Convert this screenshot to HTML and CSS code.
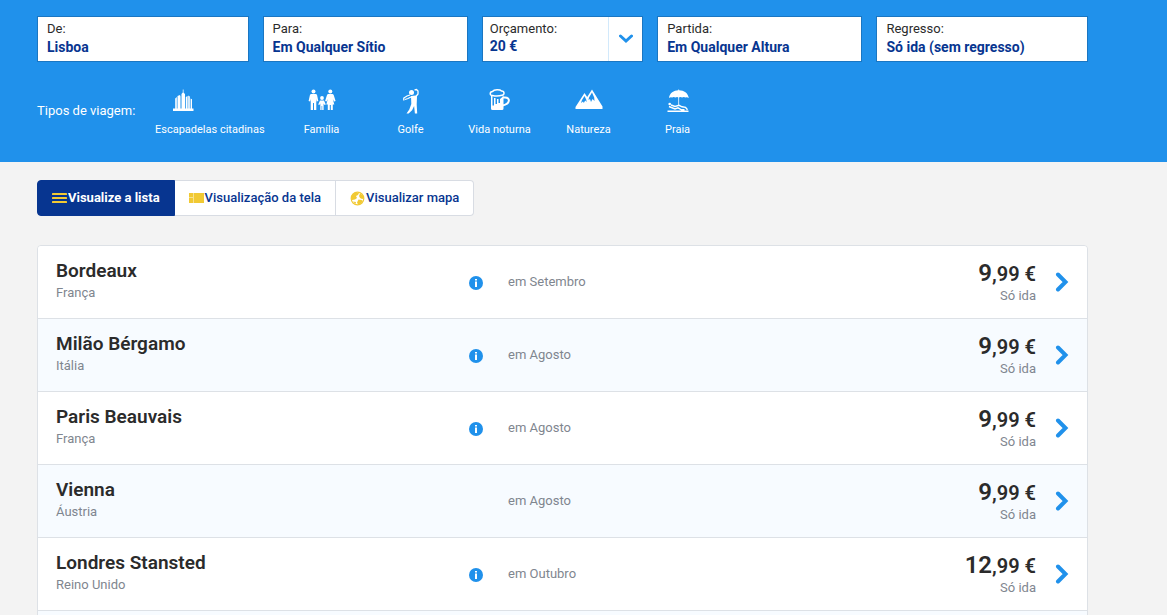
FILE: index.html
```html
<!DOCTYPE html>
<html lang="pt">
<head>
<meta charset="utf-8">
<title>Tarifas a partir de Lisboa</title>
<meta name="viewport" content="width=device-width, initial-scale=1">
<link rel="stylesheet" href="styles.css">
</head>
<body>
<header class="search">
  <form class="fields">
    <div class="field field-wide">
      <label for="from">De:</label>
      <input id="from" type="text" value="Lisboa">
    </div>
    <div class="field">
      <label for="to">Para:</label>
      <input id="to" type="text" value="Em Qualquer Sítio">
    </div>
    <div class="field field-budget">
      <label for="budget">Orçamento:</label>
      <select id="budget"><option>20 €</option></select>
      <span class="caret"><svg width="14" height="10" viewBox="0 0 14 10"><path d="M1.500 2 7 7l5.500-5" fill="none" stroke="#2091eb" stroke-width="3" stroke-linecap="round"/></svg></span>
    </div>
    <div class="field">
      <label for="out">Partida:</label>
      <input id="out" type="text" value="Em Qualquer Altura">
    </div>
    <div class="field field-wide">
      <label for="back">Regresso:</label>
      <input id="back" type="text" value="Só ida (sem regresso)">
    </div>
  </form>
  <nav class="trips" aria-label="Tipos de viagem">
    <span class="trips-label">Tipos de viagem:</span>
    <button class="trip trip-city" type="button">
      <svg width="22" height="26" viewBox="0 0 22 26" fill="#fff"><path d="M1 20.500h20.500V23H1z"/><path d="M3 10.500 5 9v12H3zM16 7.500l2 1V21h-2z" opacity=".8"/><path d="M5.500 8 8 7l.5 1.500V21h-3zM9.500 6l1.300-1.500V1.500h.7v3L13 6v15H9.500zM13.800 9l1.800-1v13h-1.800zM18.600 10.500l1.400.8V21h-1.400z"/></svg>
      <span>Escapadelas citadinas</span>
    </button>
    <button class="trip" type="button">
      <svg width="28" height="26" viewBox="0 0 28 26" fill="#fff"><circle cx="5.500" cy="3.500" r="2"/><circle cx="22.300" cy="3.500" r="2"/><circle cx="14" cy="10" r="1.900"/><path d="M3 6h5l1 .8 1.300 6.200-1.500.4L8.300 11v11H6v-7H5v7H2.700V11l-.6 2.500L.6 13 2 6.800zM20 6h4.600l1 .8 2 6.200-1.500.5-1.300-2.500 1.500 5.500h-1.500V22h-2v-5h-1v5h-2v-5.500h-1.500l1.500-5.500-1.300 2.500-1.400-.5 2-6.200zM12 12.500h4l1.800 4-1.200.6-1-1.600V22h-1.400v-4h-.6v4h-1.300v-6.500l-1 1.600-1.100-.6z"/></svg>
      <span>Família</span>
    </button>
    <button class="trip" type="button">
      <svg width="18" height="26" viewBox="0 0 18 26" fill="#fff"><circle cx="9.500" cy="4.500" r="2.500"/><path d="M9 8l4.500-.5 1.500 1-.3 8 .5 9h-2.300l-.8-7.500-2 4.200-3.500 3.300H4.500l2.800-4 2-5.500z"/><path d="M10 8.500 6 10.500 3 11.500M8 7 5 8 1.800 10v2.500M13.500 9 16 6V3l-1.500-1.500-2 .3" fill="none" stroke="#fff" stroke-width="1.300"/></svg>
      <span>Golfe</span>
    </button>
    <button class="trip" type="button">
      <svg width="24" height="26" viewBox="0 0 24 26"><path d="M4.500 7.500C1.500 7.800 1.500 3.600 4.500 3.500 6 1.300 12 1.300 13.500 3c3-.2 3.500 4 .5 4.300-2 .6-7.500.7-9.500.2z" fill="none" stroke="#fff" stroke-width="1.500"/><path d="M14.500 9.500h2.500c5.500 0 5.500 6.500-2.500 8" fill="none" stroke="#fff" stroke-width="2"/><path d="M3 8h1.500v9.500H6V10h1.500v6H9v-5h1.500v4H12v-4l3.500-3v12.500q0 1.500-1.500 1.500H4.500Q3 22 3 20.500z" fill="#fff"/></svg>
      <span>Vida noturna</span>
    </button>
    <button class="trip" type="button">
      <svg width="28" height="26" viewBox="0 0 28 26" fill="#fff" fill-rule="evenodd"><path d="M.5 19 9.500 5l2.700 4L17 1.500 27.500 18.500V21H.5zM9.500 8 7 12l-1 3 2-1.500.8 1.500 1.400-2.500 1.500 1.500-.5-2.500zM17 4.500l-3 5-.5 2.500 1.500-1 1 3 1.500-3 2 2-.3-3.500z"/></svg>
      <span>Natureza</span>
    </button>
    <button class="trip" type="button">
      <svg width="24" height="26" viewBox="0 0 24 26" fill="#fff"><path d="M3 10C3.500 5 8 2.500 12.300 2.300V1.500h.8v.8C18 2.500 22 5 22.800 10q-1.700-1.300-3.300-.5-1.700-1-3.400 0-1.700-1-3.400 0-1.700-1-3.300 0-1.700-1-3.300 0Q4.500 8.800 3 10z"/><path d="M12.300 9h.8v8.500h-.8z"/><circle cx="3.700" cy="16" r="1.300"/><path d="m5 17 4 1.500 4-1.200 3 1.500 3.500.5 2 2.500M3 18.500l6 2.500 3-1.200 3.500 2h3M1.500 23.300h21" fill="none" stroke="#fff" stroke-width="1.400"/></svg>
      <span>Praia</span>
    </button>
  </nav>
</header>
<main class="results">
  <div class="views">
    <button class="view view-active" type="button">
      <svg width="15" height="12" viewBox="0 0 15 12" fill="#f1c933"><rect width="15" height="2" y="1" rx=".6"/><rect width="15" height="2" y="5" rx=".6"/><rect width="15" height="2" y="9" rx=".6"/></svg>
      <span>Visualize a lista</span>
    </button>
    <button class="view" type="button">
      <svg width="15" height="12" viewBox="0 0 15 12" fill="#f1c933"><rect width="15" height="10" y="1" rx=".5" opacity=".55"/><path d="M0 1h4v4H0zM0 6h4v5H0zM5 1h10v10H5z"/></svg>
      <span>Visualização da tela</span>
    </button>
    <button class="view" type="button">
      <svg width="15" height="15" viewBox="0 0 15 15"><circle cx="7.500" cy="7.500" r="6.300" fill="none" stroke="#f1c933" stroke-width="1.200"/><path d="M2 4 5 1.500l4 .5L8 4 6 5l1 2-2 1.500L2 9 1 7zM10 2.500l3 2 1 3-2 .5-2-1-1-2zM8.500 8.500l3 .5L13 10l-2 2.500-3 1-1-2zM3 10.500l3 .5-.5 2z" fill="#f1c933"/></svg>
      <span>Visualizar mapa</span>
    </button>
  </div>
  <ul class="list">
    <li class="row">
      <div class="place"><h2>Bordeaux</h2><p>França</p></div>
      <div class="info"><svg width="14" height="14" viewBox="0 0 14 14"><circle cx="7" cy="7" r="7" fill="#2091eb"/><path d="M6 3h2v1.500H6zM6 5.500h2V11H6z" fill="#fff"/></svg></div>
      <p class="when">em Setembro</p>
      <div class="price"><strong>9<small>,99 €</small></strong><p>Só ida</p></div>
      <a class="go" href="#bordeaux" aria-label="Ver Bordeaux"><svg width="14" height="20" viewBox="0 0 14 20"><path d="m3 2.500 7.500 7.500L3 17.500" fill="none" stroke="#2091eb" stroke-width="4" stroke-linecap="round"/></svg></a>
    </li>
    <li class="row">
      <div class="place"><h2>Milão Bérgamo</h2><p>Itália</p></div>
      <div class="info"><svg width="14" height="14" viewBox="0 0 14 14"><circle cx="7" cy="7" r="7" fill="#2091eb"/><path d="M6 3h2v1.500H6zM6 5.500h2V11H6z" fill="#fff"/></svg></div>
      <p class="when">em Agosto</p>
      <div class="price"><strong>9<small>,99 €</small></strong><p>Só ida</p></div>
      <a class="go" href="#milao" aria-label="Ver Milão Bérgamo"><svg width="14" height="20" viewBox="0 0 14 20"><path d="m3 2.500 7.500 7.500L3 17.500" fill="none" stroke="#2091eb" stroke-width="4" stroke-linecap="round"/></svg></a>
    </li>
    <li class="row">
      <div class="place"><h2>Paris Beauvais</h2><p>França</p></div>
      <div class="info"><svg width="14" height="14" viewBox="0 0 14 14"><circle cx="7" cy="7" r="7" fill="#2091eb"/><path d="M6 3h2v1.500H6zM6 5.500h2V11H6z" fill="#fff"/></svg></div>
      <p class="when">em Agosto</p>
      <div class="price"><strong>9<small>,99 €</small></strong><p>Só ida</p></div>
      <a class="go" href="#paris" aria-label="Ver Paris Beauvais"><svg width="14" height="20" viewBox="0 0 14 20"><path d="m3 2.500 7.500 7.500L3 17.500" fill="none" stroke="#2091eb" stroke-width="4" stroke-linecap="round"/></svg></a>
    </li>
    <li class="row">
      <div class="place"><h2>Vienna</h2><p>Áustria</p></div>
      <div class="info"></div>
      <p class="when">em Agosto</p>
      <div class="price"><strong>9<small>,99 €</small></strong><p>Só ida</p></div>
      <a class="go" href="#vienna" aria-label="Ver Vienna"><svg width="14" height="20" viewBox="0 0 14 20"><path d="m3 2.500 7.500 7.500L3 17.500" fill="none" stroke="#2091eb" stroke-width="4" stroke-linecap="round"/></svg></a>
    </li>
    <li class="row">
      <div class="place"><h2>Londres Stansted</h2><p>Reino Unido</p></div>
      <div class="info"><svg width="14" height="14" viewBox="0 0 14 14"><circle cx="7" cy="7" r="7" fill="#2091eb"/><path d="M6 3h2v1.500H6zM6 5.500h2V11H6z" fill="#fff"/></svg></div>
      <p class="when">em Outubro</p>
      <div class="price"><strong>12<small>,99 €</small></strong><p>Só ida</p></div>
      <a class="go" href="#londres" aria-label="Ver Londres Stansted"><svg width="14" height="20" viewBox="0 0 14 20"><path d="m3 2.500 7.500 7.500L3 17.500" fill="none" stroke="#2091eb" stroke-width="4" stroke-linecap="round"/></svg></a>
    </li>
    <li class="row"></li>
  </ul>
</main>
</body>
</html>
```
FILE: styles.css
```css
* {
  box-sizing: border-box;
}

body {
  margin: 0;
  height: 100vh;
  overflow: hidden;
  background: #f3f3f3;
  color: #2b2b2b;
  font-family: Roboto, sans-serif;
  font-size: 13px;
  line-height: 16px;
}

h2,
p,
ul {
  margin: 0;
  padding: 0;
}

button,
input,
select {
  font: inherit;
  color: inherit;
  border: 0;
  padding: 0;
  margin: 0;
  background: none;
}

button {
  cursor: pointer;
}

svg {
  display: block;
  flex: none;
}

.search {
  padding: 16px 79px 24px 37px;
  background: #2091eb;
}

.fields {
  display: flex;
  gap: 14px;
}

.field {
  position: relative;
  display: flex;
  flex: 205 1 0;
  flex-direction: column;
  min-width: 0;
  height: 46px;
  padding: 4px 9px;
  border: 1px solid #1a76c2;
  background: #fff;
}

.field-wide {
  flex-grow: 212;
}

.field-budget {
  flex-grow: 161;
  padding: 4px 7px;
}

.field input,
.field select {
  width: 100%;
  height: 20px;
  color: #073590;
  font-size: 14px;
  font-weight: 700;
  outline: 0;
}

.field select {
  height: 18px;
  appearance: none;
}

.caret {
  position: absolute;
  inset: 0 0 0 auto;
  display: flex;
  align-items: center;
  justify-content: center;
  width: 34px;
  border-left: 1px solid #d2e9fb;
  pointer-events: none;
}

.trips {
  display: flex;
  align-items: flex-start;
  padding-top: 26px;
  color: #fff;
}

.trips-label {
  width: 118px;
  padding-top: 15px;
}

.trip {
  display: flex;
  flex-direction: column;
  align-items: center;
  gap: 8px;
  width: 89px;
  font-size: 11px;
  line-height: 16px;
  white-space: nowrap;
}

.trip-city {
  align-items: flex-start;
  width: 122px;
}

.trip-city svg {
  margin-left: 17px;
}

.results {
  padding: 18px 79px 0 37px;
}

.views {
  display: flex;
  width: max-content;
  height: 36px;
  margin-bottom: 29px;
}

.view {
  display: flex;
  align-items: center;
  gap: 1px;
  padding: 0 14px;
  border: 1px solid #d8dce3;
  border-left: 0;
  background: #fff;
  color: #073590;
  font-weight: 500;
}

.view:last-child {
  border-radius: 0 4px 4px 0;
}

.view-active {
  border: 1px solid #073590;
  border-radius: 4px 0 0 4px;
  background: #073590;
  color: #fff;
  font-weight: 700;
}

.list {
  border: 1px solid #dde1e6;
  border-radius: 4px;
  overflow: hidden;
  list-style: none;
}

.row {
  display: grid;
  grid-template-columns: 413px 39px 1fr 150px 51px;
  align-items: center;
  height: 73px;
  padding-left: 18px;
  border-bottom: 1px solid #dde1e6;
  background: #fff;
  color: #7f868f;
}

.row:nth-child(even) {
  background: #f7fbff;
}

.place {
  padding-bottom: 4px;
}

.place h2 {
  color: #2b2b2b;
  font-size: 19px;
  font-weight: 600;
  line-height: 24px;
}

.place p {
  padding-top: 2px;
}

.info {
  padding-top: 2px;
}

.price {
  padding-bottom: 2px;
  text-align: right;
}

.price strong {
  display: block;
  color: #2b2b2b;
  font-size: 24px;
  font-weight: 600;
  line-height: 28px;
}

.price small {
  font-size: 20px;
}

.go {
  padding-left: 19px;
}
```
